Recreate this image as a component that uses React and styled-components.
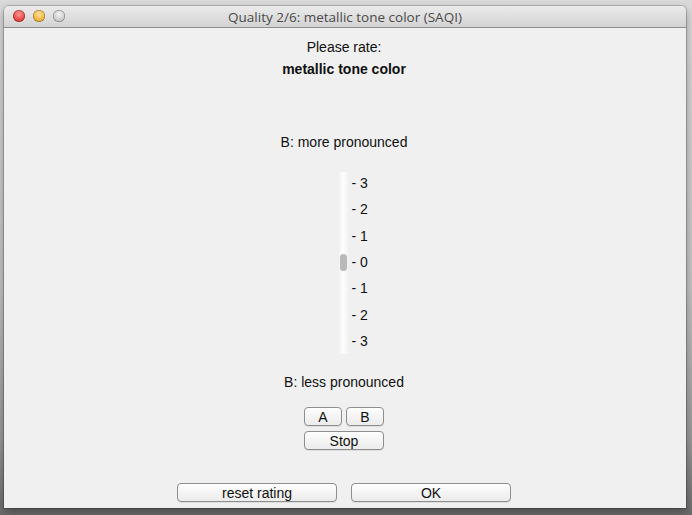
import styled, { createGlobalStyle } from 'styled-components'

const GlobalStyle = createGlobalStyle`
  html, body {
    margin: 0;
    padding: 0;
  }
  body {
    width: 692px;
    height: 515px;
    overflow: hidden;
    background: linear-gradient(#dadada 0%, #c4c4c4 55%, #9a9a9a 85%, #6c6c6c 100%);
  }
`;

const Window = styled.div`
  width: 682px;
  height: 502px;
  margin: 6px 0 0 4px;
  display: flex;
  flex-direction: column;
  background: #f0f0f0;
  border-radius: 5px 5px 0 0;
  box-shadow: 0 0 0 1px rgba(0, 0, 0, 0.18), 0 4px 10px rgba(0, 0, 0, 0.35);
  overflow: hidden;
`;

const TitleBar = styled.div`
  height: 21px;
  flex-shrink: 0;
  position: relative;
  display: flex;
  align-items: center;
  justify-content: center;
  background: linear-gradient(#ebebeb, #d3d3d3);
  border-bottom: 1px solid #8f8f8f;
  font-family: "Open Sans", "DejaVu Sans", sans-serif;
  font-size: 13.5px;
  color: #4a4a4a;
`;

const Lights = styled.div`
  position: absolute;
  left: 9px;
  top: 4px;
  display: flex;
  gap: 8px;
`;

const Light = styled.span`
  width: 12px;
  height: 12px;
  border-radius: 50%;
  background: radial-gradient(circle at 50% 35%, ${p => p.$hi} 0%, ${p => p.$color} 60%, ${p => p.$dark} 100%);
  box-shadow: inset 0 0 0 0.5px rgba(0, 0, 0, 0.45);
`;

const Content = styled.div`
  flex: 1;
  display: flex;
  flex-direction: column;
  align-items: center;
  padding: 11px 2px 0 0;
  font-family: "Liberation Sans", Arial, sans-serif;
  font-size: 14px;
  color: #111;
`;

const Line = styled.div`
  line-height: 16px;
  height: 16px;
  font-weight: ${p => (p.$bold ? 'bold' : 'normal')};
  margin-top: ${p => p.$top || 0}px;
`;

const SliderRow = styled.div`
  display: flex;
  padding-left: 22px;
  gap: 4px;
  margin-top: 22px;
  height: 182px;
`;

const Track = styled.div`
  width: 9px;
  height: 100%;
  position: relative;
  background: linear-gradient(90deg, #f3f3f3, #fdfdfd 50%, #f3f3f3);
`;

const Thumb = styled.div`
  position: absolute;
  left: 1px;
  top: 82px;
  width: 7px;
  height: 17px;
  border-radius: 4px;
  background: #b9b9b9;
`;

const Ticks = styled.div`
  display: flex;
  flex-direction: column;
  justify-content: space-between;
  padding: 3px 0 5px;
  width: 20px;
`;

const Tick = styled.div`
  line-height: 16px;
  height: 16px;
  white-space: nowrap;
`;

const ButtonRow = styled.div`
  display: flex;
  gap: ${p => p.$gap || 4}px;
  margin-top: ${p => p.$top || 0}px;
`;

const Button = styled.button`
  width: ${p => p.$w}px;
  height: 19px;
  padding: 0;
  border: 1px solid #8e8e8e;
  border-radius: 4px;
  background: linear-gradient(#ffffff, #f4f4f4 50%, #ececec);
  box-shadow: 0 1px 0 rgba(0, 0, 0, 0.08);
  font-family: "Liberation Sans", Arial, sans-serif;
  font-size: 14px;
  color: #111;
  line-height: 16px;
  cursor: pointer;
`;

const ticks = ['3', '2', '1', '0', '1', '2', '3']

const App = () => {
  return (
    <>
      <GlobalStyle />
      <Window>
        <TitleBar>
          <Lights>
            <Light $hi="#ff9a9a" $color="#e8443f" $dark="#a8201c" />
            <Light $hi="#ffe3a0" $color="#f2b43a" $dark="#b87c16" />
            <Light $hi="#f2f2f2" $color="#cdcdcd" $dark="#9b9b9b" />
          </Lights>
          Quality 2/6: metallic tone color (SAQI)
        </TitleBar>
        <Content>
          <Line>Please rate:</Line>
          <Line $bold $top={6}>metallic tone color</Line>
          <Line $top={57}>B: more pronounced</Line>
          <SliderRow>
            <Track>
              <Thumb />
            </Track>
            <Ticks>
              {ticks.map((t, i) => (
                <Tick key={i}>- {t}</Tick>
              ))}
            </Ticks>
          </SliderRow>
          <Line $top={20}>B: less pronounced</Line>
          <ButtonRow $top={17}>
            <Button $w={38}>A</Button>
            <Button $w={38}>B</Button>
          </ButtonRow>
          <ButtonRow $top={5}>
            <Button $w={80}>Stop</Button>
          </ButtonRow>
          <ButtonRow $top={33} $gap={14}>
            <Button $w={160}>reset rating</Button>
            <Button $w={160}>OK</Button>
          </ButtonRow>
        </Content>
      </Window>
    </>
  )
}

export default App
